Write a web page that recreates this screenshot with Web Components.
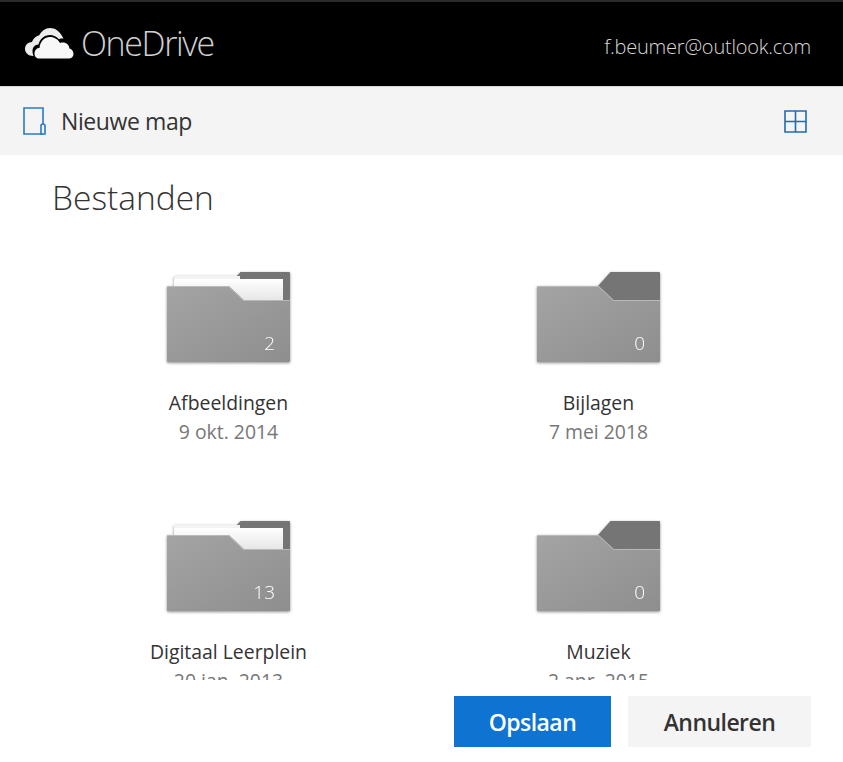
<!DOCTYPE html>
<html>
<head>
<meta charset="utf-8">
<title>OneDrive</title>
<style>
    html, body { margin: 0; height: 100%; background: #fff; }
    body { font-family: "Open Sans", "Noto Sans", sans-serif; color: #333; overflow: hidden; }
</style>
</head>
<body>
<od-picker>
    <od-header slot="header" user="f.beumer@outlook.com"></od-header>
    <od-toolbar slot="toolbar" label="Nieuwe map"></od-toolbar>
    <od-folder name="Afbeeldingen" date="9 okt. 2014" count="2" filled></od-folder>
    <od-folder name="Bijlagen" date="7 mei 2018" count="0"></od-folder>
    <od-folder name="Digitaal Leerplein" date="20 jan. 2013" count="13" filled></od-folder>
    <od-folder name="Muziek" date="2 apr. 2015" count="0"></od-folder>
    <od-button slot="footer" primary>Opslaan</od-button>
    <od-button slot="footer">Annuleren</od-button>
</od-picker>

<script>
class OdPicker extends HTMLElement {
    connectedCallback() {
        this.attachShadow({ mode: 'open' });
        this.shadowRoot.innerHTML = `
            <style>
                :host {
                    display: flex;
                    flex-direction: column;
                    height: 762px;
                }
                .content {
                    height: 525px;
                    overflow: hidden;
                }
                h1 {
                    margin: 0;
                    padding: 18px 0 0 52px;
                    font-size: 33.500px;
                    line-height: 48px;
                    font-weight: 300;
                    color: #333;
                }
                .grid {
                    display: grid;
                    grid-template-columns: 370px 370px;
                    grid-auto-rows: 249px;
                    padding: 51px 0 0 43.500px;
                }
                .footer {
                    display: flex;
                    justify-content: flex-end;
                    gap: 17px;
                    padding: 16px 32px 0 0;
                }
            </style>
            <slot name="header"></slot>
            <slot name="toolbar"></slot>
            <div class="content">
                <h1>Bestanden</h1>
                <div class="grid"><slot></slot></div>
            </div>
            <div class="footer"><slot name="footer"></slot></div>
        `;
    }
}

class OdHeader extends HTMLElement {
    connectedCallback() {
        this.attachShadow({ mode: 'open' });
        this.shadowRoot.innerHTML = `
            <style>
                :host {
                    display: flex;
                    align-items: center;
                    justify-content: space-between;
                    box-sizing: border-box;
                    height: 86px;
                    border-top: 2px solid #2b2b2b;
                    padding: 0 32px 0 25px;
                    background: #000;
                }
                .brand {
                    display: flex;
                    align-items: center;
                    gap: 7px;
                    margin-top: -3px;
                }
                .name {
                    font-size: 34px;
                    font-weight: 300;
                    letter-spacing: -1.4px;
                    color: #d0d0d0;
                }
                .user {
                    font-size: 20px;
                    font-weight: 300;
                    letter-spacing: -0.22px;
                    color: #d8d8d8;
                    margin-top: 4px;
                }
                svg { display: block; margin-top: 2px; }
            </style>
            <div class="brand">
                <svg width="49" height="31" viewBox="0 0 49 31">
                    <path fill="#ececec" d="M8.500 28C3 28 0 24.500 0 21 0 17 3 14 7 14 8 11 11 8 14 7.500 16.500 3 20.500 0 25 0 30 0 35 3 38.500 10.500 36.500 10.500 35 10.500 34 11.300 31 8 28 7 25 7 19 7 15 11 13.500 16.500 9.500 16.500 7.500 19.500 7.500 23 7.500 25 8 26.500 8.500 28Z"/>
                    <path fill="#f8f8f8" d="M14 30.500C11 30.500 9.500 28 9.500 25.500 9.500 22 12 20 14.500 20 15 13.500 19.500 9 25 9 29.500 9 33 11.500 35 15 36 14.500 37 14.500 38 14.500 41.500 14.500 44 17 44.500 20.500 47 21 48.500 23.500 48.500 26 48.500 28.500 46.500 30.500 44 30.500Z"/>
                </svg>
                <span class="name">OneDrive</span>
            </div>
            <span class="user">${this.getAttribute('user') || ''}</span>
        `;
    }
}

class OdToolbar extends HTMLElement {
    connectedCallback() {
        this.attachShadow({ mode: 'open' });
        this.shadowRoot.innerHTML = `
            <style>
                :host {
                    display: flex;
                    align-items: center;
                    justify-content: space-between;
                    box-sizing: border-box;
                    height: 69px;
                    padding: 0 36px 0 23px;
                    background: #f4f4f4;
                    border-top: 1px solid #d8d8d8;
                }
                .new {
                    display: flex;
                    align-items: center;
                    gap: 15px;
                    font-size: 23px;
                    letter-spacing: -0.4px;
                    color: #333;
                }
                svg { display: block; }
            </style>
            <div class="new">
                <svg width="23" height="28" viewBox="0 0 23 28" fill="none" stroke="#2b79c2" stroke-width="1.6">
                    <path d="M1 1h19v26H1z"/>
                    <path d="M18 27v-8a2 2 0 0 1 4 0v8z" fill="#f4f4f4"/>
                </svg>
                <span>${this.getAttribute('label') || ''}</span>
            </div>
            <svg width="23" height="23" viewBox="0 0 23 23" fill="none" stroke="#1f6cb0" stroke-width="1.6">
                <path d="M1 1h21v21H1zM11.500 1v21M1 11.500h21"/>
            </svg>
        `;
    }
}

class OdFolder extends HTMLElement {
    connectedCallback() {
        const name = this.getAttribute('name') || '';
        const date = this.getAttribute('date') || '';
        const count = this.getAttribute('count') || '';
        // Papers sticking out of the folder, only when it has files in it
        const paper = this.hasAttribute('filled')
            ? '<path fill="#f3f3f3" d="M7 4h66v3H7z"/><path fill="url(#sheet)" d="M7 7h109v25H7z"/>'
            : '';

        this.attachShadow({ mode: 'open' });
        this.shadowRoot.innerHTML = `
            <style>
                :host {
                    display: flex;
                    flex-direction: column;
                    align-items: center;
                    width: 370px;
                    text-align: center;
                }
                .icon {
                    position: relative;
                    width: 123px;
                    height: 90px;
                    filter: drop-shadow(0 1.5px 1.5px rgba(0, 0, 0, 0.45));
                }
                svg { display: block; }
                .count {
                    position: absolute;
                    right: 15px;
                    bottom: 7px;
                    font-size: 19px;
                    line-height: 24px;
                    font-weight: 300;
                    color: #fff;
                }
                .name {
                    margin-top: 28px;
                    font-size: 19.400px;
                    line-height: 26px;
                    color: #333;
                }
                .date {
                    margin-top: 3px;
                    font-size: 19.400px;
                    line-height: 26px;
                    color: #777;
                }
            </style>
            <div class="icon">
                <svg width="123" height="90" viewBox="0 0 123 90">
                    <defs>
                        <linearGradient id="body" x1="0" y1="0" x2="1" y2="1">
                            <stop offset="0" stop-color="#a4a4a4"/>
                            <stop offset="1" stop-color="#8e8e8e"/>
                        </linearGradient>
                        <linearGradient id="sheet" x1="0" y1="0" x2="0" y2="1">
                            <stop offset="0" stop-color="#ffffff"/>
                            <stop offset="1" stop-color="#e2e2e2"/>
                        </linearGradient>
                    </defs>
                    <path fill="#757575" d="M73.500 0H122a1 1 0 0 1 1 1v29H61V14z"/>
                    ${paper}
                    <path fill="url(#body)" d="M1 14h61l15 14h46v61a1 1 0 0 1-1 1H1a1 1 0 0 1-1-1V15a1 1 0 0 1 1-1z"/>
                    <path fill="none" stroke="#c4c4c4" stroke-width="1" d="M0 14.500h61.500l15 14h46.500" opacity=".7"/>
                </svg>
                <span class="count">${count}</span>
            </div>
            <div class="name">${name}</div>
            <div class="date">${date}</div>
        `;
    }
}

class OdButton extends HTMLElement {
    connectedCallback() {
        const primary = this.hasAttribute('primary');
        this.attachShadow({ mode: 'open' });
        this.shadowRoot.innerHTML = `
            <style>
                :host {
                    display: flex;
                    align-items: center;
                    justify-content: center;
                    box-sizing: border-box;
                    width: ${primary ? 157 : 183}px;
                    height: 51px;
                    background: ${primary ? '#0f73d1' : '#f4f4f4'};
                    color: ${primary ? '#fff' : '#333'};
                    font-size: 23px;
                    font-weight: 600;
                    letter-spacing: -0.55px;
                    cursor: pointer;
                }
            </style>
            <slot></slot>
        `;
    }
}

customElements.define('od-picker', OdPicker);
customElements.define('od-header', OdHeader);
customElements.define('od-toolbar', OdToolbar);
customElements.define('od-folder', OdFolder);
customElements.define('od-button', OdButton);
</script>
</body>
</html>
